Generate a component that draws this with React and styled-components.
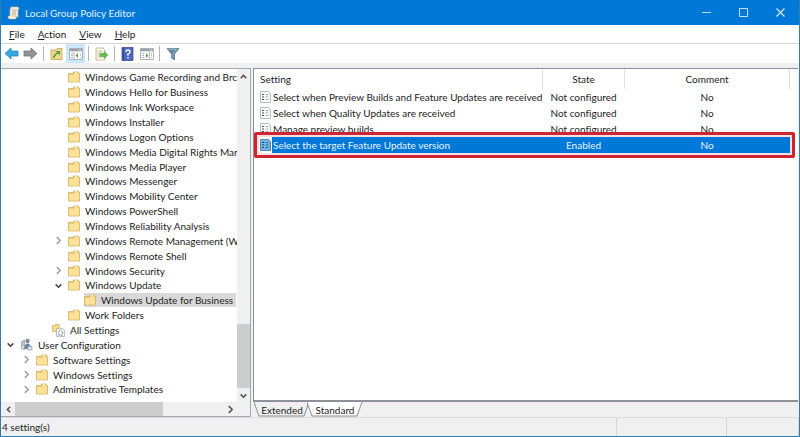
import styled, { createGlobalStyle } from 'styled-components';

const GlobalStyle = createGlobalStyle`
  * {
    box-sizing: border-box;
  }

  body {
    margin: 0;
    font-family: Lato, "Open Sans", sans-serif;
    font-size: 10px;
    line-height: 14px;
    font-variant-ligatures: none;
    color: #222;
  }

  button {
    font: inherit;
    font-variant-ligatures: none;
    color: inherit;
    border: 0;
    margin: 0;
    padding: 0;
    background: none;
  }

  svg {
    display: block;
    flex: none;
  }
`;

const WindowStyled = styled.div`
  height: 100vh;
  display: flex;
  flex-direction: column;
  border: solid #2f7fa8;
  border-width: 0 1px 1px 1px;
  background: #f0f0f0;
`;

const TitleBarStyled = styled.header`
  height: 25px;
  flex: none;
  display: flex;
  align-items: center;
  padding-left: 6px;
  background: #0078d7;
  color: #e2f1ff;
`;

const TitleStyled = styled.h1`
  flex: 1;
  margin: 0 0 0 5px;
  font-size: 10px;
  font-weight: 400;
`;

const CaptionButtonStyled = styled.button`
  width: 37px;
  height: 25px;
  display: flex;
  align-items: center;
  justify-content: center;
`;

const MenuBarStyled = styled.nav`
  height: 19px;
  flex: none;
  display: flex;
  align-items: center;
  gap: 13px;
  padding-left: 8px;
  background: #fff;
  border-bottom: 1px solid #d4d4d4;
`;

const ToolBarStyled = styled.div`
  height: 19px;
  flex: none;
  display: flex;
  align-items: center;
  padding-left: 1px;
  background: #fff;
`;

const ToolButtonStyled = styled.button`
  width: 19px;
  height: 19px;
  display: flex;
  align-items: center;
  justify-content: center;
  background: ${props => props.$active ? '#cce8ff' : 'transparent'};
`;

const ToolDividerStyled = styled.span`
  width: 1px;
  height: 15px;
  margin: 0 3px;
  background: #b4b4b4;
`;

const ContentStyled = styled.main`
  flex: 1;
  min-height: 0;
  display: grid;
  grid-template-columns: 250px minmax(0, 1fr);
  column-gap: 2px;
  padding: 5px 1px 0 0;
`;

const TreePaneStyled = styled.section`
  min-height: 0;
  display: grid;
  grid-template-columns: minmax(0, 1fr) 13px;
  grid-template-rows: minmax(0, 1fr) 14px;
  background: #fff;
  border: solid #a5a9ae;
  border-width: 1px 1px 1px 0;
`;

const TreeStyled = styled.ul`
  min-height: 0;
  margin: 0;
  padding: 1px 0 5px;
  list-style: none;
  display: flex;
  flex-direction: column;
  overflow: hidden;
`;

const TreeRowStyled = styled.li`
  flex: 1;
  min-height: 0;
  display: flex;
  align-items: center;
  padding-left: ${props => props.$level * 16 + 5}px;
  white-space: nowrap;
`;

const ExpanderStyled = styled.span`
  width: 14px;
  flex: none;
`;

const TreeItemStyled = styled.span`
  display: flex;
  align-items: center;
  gap: 5px;
  padding-right: 3px;
  background: ${props => props.$selected ? '#d9d9d9' : 'transparent'};
`;

const VerticalScrollStyled = styled.div`
  min-height: 0;
  display: flex;
  flex-direction: column;
  background: #f0f0f0;
`;

const HorizontalScrollStyled = styled.div`
  display: flex;
  padding-left: 1px;
  background: #f0f0f0;
`;

const ScrollButtonStyled = styled.button`
  width: 13px;
  height: 14px;
  flex: none;
  display: flex;
  align-items: center;
  justify-content: center;
`;

const ScrollTrackStyled = styled.div`
  flex: 1;
  display: flex;
  flex-direction: ${props => props.$vertical ? 'column' : 'row'};
  justify-content: ${props => props.$vertical ? 'flex-end' : 'flex-start'};
`;

const ScrollThumbStyled = styled.div`
  flex: 0 0 ${props => props.$size};
  background: #cdcdcd;
`;

const ScrollCornerStyled = styled.div`
  background: #f0f0f0;
`;

const DetailPaneStyled = styled.section`
  min-width: 0;
  min-height: 0;
  display: flex;
  flex-direction: column;
`;

const ListStyled = styled.div`
  flex: 1;
  background: #fff;
  border: solid #8d9298;
  border-width: 1px 0 2px 1px;
`;

const TableStyled = styled.table`
  width: calc(100% - 8px);
  table-layout: fixed;
  border-collapse: collapse;
`;

const HeadCellStyled = styled.th`
  width: ${props => props.$width || 'auto'};
  height: 20px;
  padding: 0 0 0 ${props => props.$align ? 0 : 6}px;
  font-weight: 400;
  text-align: ${props => props.$align || 'left'};
  border-right: 1px solid #e2e2e2;
`;

const CellStyled = styled.td`
  height: 16px;
  padding: 0;
  text-align: ${props => props.$align || 'left'};
  white-space: nowrap;
`;

const SettingStyled = styled.span`
  display: flex;
  align-items: center;
  gap: 1px;
  padding-left: 6px;
`;

const SettingNameStyled = styled.span`
  flex: 1;
  padding-left: 1px;
  line-height: 16px;
`;

const RowStyled = styled.tr`
  position: relative;
  color: ${props => props.$selected ? '#e9f4ff' : 'inherit'};

  ${CellStyled}:not(:first-child),
  ${SettingNameStyled} {
    background: ${props => props.$selected ? '#0078d7' : 'transparent'};
  }
`;

const HighlightStyled = styled.span`
  position: absolute;
  inset: -5px -5px -5px 0;
  border: 3px solid #cf2431;
  border-radius: 2px;
  box-shadow: inset 0 0 0 2px #f7dfe2;
  pointer-events: none;
`;

const TabsStyled = styled.div`
  height: 15px;
  flex: none;
  display: flex;
  padding-left: 1px;
`;

const TabStyled = styled.button`
  position: relative;
  width: 56px;
  height: 15px;
  margin-right: -3px;
`;

const TabShapeStyled = styled.svg`
  position: absolute;
  inset: 0;
  width: 100%;
  height: 100%;
`;

const TabTextStyled = styled.span`
  position: relative;
`;

const StatusBarStyled = styled.footer`
  height: 19px;
  flex: none;
  display: grid;
  grid-template-columns: 1fr 110px 72px;
  border-top: 1px solid #dcdcdc;
`;

const StatusCellStyled = styled.span`
  padding: 2px 0 0 1px;
  border-right: 1px solid #d7d7d7;
`;

const ScrollIcon = () => (
  <svg width="13" height="14" viewBox="0 0 13 14">
    <path d="M4 1h7l1 2-1 1v7H3V4z" fill="#f4efdf" stroke="#cbbd98" strokeWidth=".7" />
    <path d="M5 4h5M5 6h4M5 8h4" stroke="#a99c7b" strokeWidth=".8" />
    <path d="M1 10h8v3H2q-1-1-1-3z" fill="#fffaf0" stroke="#bda878" strokeWidth=".6" />
  </svg>
);

const FolderIcon = () => (
  <svg width="12" height="12" viewBox="0 0 12 12">
    <path d="M.5 2.5h5V1h5v1.5h1V11H.5z" fill="#f0cd73" stroke="#cda953" strokeWidth=".7" />
    <path d="M1 4h5l1-1.2h4v7.8H1z" fill="#fbe29a" />
    <path d="M6.5 1.8h3" stroke="#fff8dc" strokeWidth=".9" />
  </svg>
);

const AllSettingsIcon = () => (
  <svg width="13" height="13" viewBox="0 0 13 13">
    <path d="M.5 1.5h3V.5h3v1h1v6h-7z" fill="#f8dc8d" stroke="#d1ad58" strokeWidth=".7" />
    <path d="M4.5 4.5h6l2 2v6h-8z" fill="#fafafa" stroke="#a3a7ab" strokeWidth=".7" />
    <circle cx="8.5" cy="8.7" r="2.2" fill="none" stroke="#a0a9af" strokeWidth="1.2" strokeDasharray="1.3 .6" />
    <path d="M6 11.5h5" stroke="#b1b7bb" strokeWidth=".7" />
  </svg>
);

const UserIcon = () => (
  <svg width="13" height="13" viewBox="0 0 12 13">
    <path d="M1 3.5 4 2v9.5l-3-1z" fill="#d7dce0" stroke="#899199" strokeWidth=".7" />
    <path d="M2 5l1.3-.5M2 7h1.3" stroke="#58636d" strokeWidth=".7" />
    <circle cx="7" cy="3" r="2.2" fill="#7f8d9e" />
    <path d="M4 11q0-5.5 3-5.5t3.5 5.5z" fill="#6680a6" />
    <path d="M7.5 8.5h4V12h-5z" fill="#dbe0e5" stroke="#8b949d" strokeWidth=".6" />
  </svg>
);

const PolicyIcon = ({ selected }) => (
  <svg width="11" height="12" viewBox="0 0 11 12">
    <path d="M.5.5h8l2 2v9H.5z" fill={selected ? '#76b5df' : '#fff'} stroke={selected ? '#2f78aa' : '#a9adb1'} strokeWidth=".8" />
    <path d="M2 3.5h2M2 6h2M2 8.5h2" stroke={selected ? '#124d7c' : '#3f4e5a'} strokeWidth="1.2" />
    <path d="M5.5 3.5h3M5.5 6h3M5.5 8.5h3" stroke={selected ? '#23628f' : '#9ba3aa'} strokeWidth=".9" />
  </svg>
);

const ArrowIcon = ({ back }) => (
  <svg width="15" height="13" viewBox="0 0 15 13">
    <path
      d={back ? 'M1 6.5 7 1v3h7v5H7v3z' : 'M14 6.5 8 1v3H1v5h7v3z'}
      fill={back ? '#35a8df' : '#929292'}
      stroke={back ? '#2588bd' : '#777'}
      strokeWidth=".8"
    />
  </svg>
);

const UpIcon = () => (
  <svg width="14" height="14" viewBox="0 0 14 14">
    <path d="M1 3h5l1-1.5h5v11H1z" fill="#f0d98a" stroke="#b79c4c" strokeWidth=".7" />
    <path d="M3.5 11Q4 8 8 5.5" fill="none" stroke="#4f9c3c" strokeWidth="1.4" />
    <path d="M5.5 4H10v4.5z" fill="#4f9c3c" />
  </svg>
);

const PaneIcon = ({ right }) => (
  <svg width="14" height="12" viewBox="0 0 14 12">
    <path d="M.5.5h13v11H.5z" fill="#fff" stroke="#9aa0a6" strokeWidth=".8" />
    <path d="M1 1h12v2.3H1z" fill="#989fa5" />
    <path d="M9.5 2h.8M11.3 2h.8" stroke="#fff" />
    <path d={right ? 'M9.5 4v7' : 'M5 4v7'} stroke="#a5acb2" strokeWidth=".8" />
    <path d="M2 5.5h2M2 7.5h2M2 9.5h2M11 5.5h1M11 7.5h1M11 9.5h1" stroke="#a6afb7" strokeWidth=".9" />
    <path d={right ? 'M6 5v5l2.5-2.5z' : 'M9 5v5L6.5 7.5z'} fill="#5aa852" />
  </svg>
);

const ExportIcon = () => (
  <svg width="14" height="14" viewBox="0 0 14 14">
    <path d="M1 1h7l2 2v10H1z" fill="#fffbed" stroke="#b5aa7c" strokeWidth=".8" />
    <path d="M2.5 4h5M2.5 6h3M2.5 8h2M2.5 10h5" stroke="#a5a78f" strokeWidth=".7" />
    <path d="M5 6.5h4v-2L13 8l-4 3.5v-2H5z" fill="#65bd50" stroke="#43983a" strokeWidth=".5" />
  </svg>
);

const HelpIcon = () => (
  <svg width="13" height="14" viewBox="0 0 13 14">
    <path d="M1 .5h11v13H1z" fill="#4c68c0" stroke="#2d448c" strokeWidth=".7" />
    <path d="M2.3 1v12" stroke="#2c428a" />
    <path d="M5 5q0-2 2-2t2 2q0 1-2 2v1.8M7 10v1.5" fill="none" stroke="#fff" strokeWidth="1.4" />
  </svg>
);

const FilterIcon = () => (
  <svg width="14" height="14" viewBox="0 0 14 14">
    <path d="M1 1.5h12L8.5 7v6L5.5 11V7z" fill="#65859e" stroke="#47677f" strokeWidth=".6" />
    <path d="M2.5 2.3h8.2L6.8 6.7v4" fill="none" stroke="#a9c4d5" strokeWidth=".9" />
  </svg>
);

const chevrons = {
  up: 'M1.5 5.5 4 3l2.5 2.5',
  down: 'M1.5 3 4 5.5 6.5 3',
  left: 'M5.5 1.5 3 4l2.5 2.5',
  right: 'M2.5 1 5.5 4l-3 3',
};

const Chevron = ({ direction, color = '#505050' }) => (
  <svg width="9" height="9" viewBox="0 0 8 8">
    <path d={chevrons[direction]} fill="none" stroke={color} strokeWidth="1.3" />
  </svg>
);

const treeIcons = {
  folder: FolderIcon,
  all: AllSettingsIcon,
  user: UserIcon,
};

const tree = [
  { label: 'Windows Game Recording and Brc', level: 3 },
  { label: 'Windows Hello for Business', level: 3 },
  { label: 'Windows Ink Workspace', level: 3 },
  { label: 'Windows Installer', level: 3 },
  { label: 'Windows Logon Options', level: 3 },
  { label: 'Windows Media Digital Rights Mar', level: 3 },
  { label: 'Windows Media Player', level: 3 },
  { label: 'Windows Messenger', level: 3 },
  { label: 'Windows Mobility Center', level: 3 },
  { label: 'Windows PowerShell', level: 3 },
  { label: 'Windows Reliability Analysis', level: 3 },
  { label: 'Windows Remote Management (W', level: 3, expander: 'right' },
  { label: 'Windows Remote Shell', level: 3 },
  { label: 'Windows Security', level: 3, expander: 'right' },
  { label: 'Windows Update', level: 3, expander: 'down' },
  { label: 'Windows Update for Business', level: 4, selected: true },
  { label: 'Work Folders', level: 3 },
  { label: 'All Settings', level: 2, icon: 'all' },
  { label: 'User Configuration', level: 0, icon: 'user', expander: 'down' },
  { label: 'Software Settings', level: 1, expander: 'right' },
  { label: 'Windows Settings', level: 1, expander: 'right' },
  { label: 'Administrative Templates', level: 1, expander: 'right' },
];

const settings = [
  { name: 'Select when Preview Builds and Feature Updates are received', state: 'Not configured', comment: 'No' },
  { name: 'Select when Quality Updates are received', state: 'Not configured', comment: 'No' },
  { name: 'Manage preview builds', state: 'Not configured', comment: 'No' },
  { name: 'Select the target Feature Update version', state: 'Enabled', comment: 'No', selected: true },
];

const TreeRow = ({ item }) => {
  const Icon = treeIcons[item.icon || 'folder'];

  return (
    <TreeRowStyled $level={item.level}>
      <ExpanderStyled>
        {item.expander && <Chevron direction={item.expander} color={item.expander === 'down' ? '#404040' : '#a0a0a0'} />}
      </ExpanderStyled>
      <TreeItemStyled $selected={item.selected}>
        <Icon />
        {item.label}
      </TreeItemStyled>
    </TreeRowStyled>
  );
};

const SettingRow = ({ setting }) => (
  <RowStyled $selected={setting.selected}>
    <CellStyled>
      <SettingStyled>
        <PolicyIcon selected={setting.selected} />
        <SettingNameStyled>{setting.name}</SettingNameStyled>
      </SettingStyled>
    </CellStyled>
    <CellStyled $align="center">{setting.state}</CellStyled>
    <CellStyled $align="center">
      {setting.comment}
      {setting.selected && <HighlightStyled />}
    </CellStyled>
  </RowStyled>
);

const App = () => (
  <>
    <GlobalStyle />
    <WindowStyled>
      <TitleBarStyled>
        <ScrollIcon />
        <TitleStyled>Local Group Policy Editor</TitleStyled>
        <CaptionButtonStyled aria-label="Minimize">
          <svg width="9" height="9" viewBox="0 0 9 9"><path d="M0 4.5h9" stroke="#b9dcf7" /></svg>
        </CaptionButtonStyled>
        <CaptionButtonStyled aria-label="Maximize">
          <svg width="9" height="9" viewBox="0 0 9 9"><path d="M.5.5h8v8h-8z" fill="none" stroke="#c9e4fa" /></svg>
        </CaptionButtonStyled>
        <CaptionButtonStyled aria-label="Close">
          <svg width="9" height="9" viewBox="0 0 9 9"><path d="m.5.5 8 8m0-8-8 8" stroke="#d9edfc" strokeWidth="1.1" /></svg>
        </CaptionButtonStyled>
      </TitleBarStyled>
      <MenuBarStyled>
        <button><u>F</u>ile</button>
        <button><u>A</u>ction</button>
        <button><u>V</u>iew</button>
        <button><u>H</u>elp</button>
      </MenuBarStyled>
      <ToolBarStyled>
        <ToolButtonStyled aria-label="Back"><ArrowIcon back /></ToolButtonStyled>
        <ToolButtonStyled aria-label="Forward"><ArrowIcon /></ToolButtonStyled>
        <ToolDividerStyled />
        <ToolButtonStyled aria-label="Up one level"><UpIcon /></ToolButtonStyled>
        <ToolButtonStyled aria-label="Show console tree" $active><PaneIcon /></ToolButtonStyled>
        <ToolDividerStyled />
        <ToolButtonStyled aria-label="Export list"><ExportIcon /></ToolButtonStyled>
        <ToolDividerStyled />
        <ToolButtonStyled aria-label="Help"><HelpIcon /></ToolButtonStyled>
        <ToolButtonStyled aria-label="Show action pane"><PaneIcon right /></ToolButtonStyled>
        <ToolDividerStyled />
        <ToolButtonStyled aria-label="Filter"><FilterIcon /></ToolButtonStyled>
      </ToolBarStyled>
      <ContentStyled>
        <TreePaneStyled>
          <TreeStyled>
            {tree.map(item => <TreeRow key={item.label} item={item} />)}
          </TreeStyled>
          <VerticalScrollStyled>
            <ScrollButtonStyled aria-label="Scroll up"><Chevron direction="up" /></ScrollButtonStyled>
            <ScrollTrackStyled $vertical><ScrollThumbStyled $size="21%" /></ScrollTrackStyled>
            <ScrollButtonStyled aria-label="Scroll down"><Chevron direction="down" /></ScrollButtonStyled>
          </VerticalScrollStyled>
          <HorizontalScrollStyled>
            <ScrollButtonStyled aria-label="Scroll left"><Chevron direction="left" /></ScrollButtonStyled>
            <ScrollTrackStyled><ScrollThumbStyled $size="71%" /></ScrollTrackStyled>
            <ScrollButtonStyled aria-label="Scroll right"><Chevron direction="right" /></ScrollButtonStyled>
          </HorizontalScrollStyled>
          <ScrollCornerStyled />
        </TreePaneStyled>
        <DetailPaneStyled>
          <ListStyled>
            <TableStyled>
              <thead>
                <tr>
                  <HeadCellStyled>Setting</HeadCellStyled>
                  <HeadCellStyled $width="82px" $align="center">State</HeadCellStyled>
                  <HeadCellStyled $width="165px" $align="center">Comment</HeadCellStyled>
                </tr>
              </thead>
              <tbody>
                {settings.map(setting => <SettingRow key={setting.name} setting={setting} />)}
              </tbody>
            </TableStyled>
          </ListStyled>
          <TabsStyled>
            <TabStyled>
              <TabShapeStyled viewBox="0 0 56 15" preserveAspectRatio="none">
                <path d="M0 0 5 14h45l5-14" fill="#f0f0f0" stroke="#777" strokeWidth=".8" />
              </TabShapeStyled>
              <TabTextStyled>Extended</TabTextStyled>
            </TabStyled>
            <TabStyled>
              <TabShapeStyled viewBox="0 0 56 15" preserveAspectRatio="none">
                <path d="M0 0 5 14h45l5-14" fill="#fff" stroke="#777" strokeWidth=".8" />
              </TabShapeStyled>
              <TabTextStyled>Standard</TabTextStyled>
            </TabStyled>
          </TabsStyled>
        </DetailPaneStyled>
      </ContentStyled>
      <StatusBarStyled>
        <StatusCellStyled>4 setting(s)</StatusCellStyled>
        <StatusCellStyled />
        <StatusCellStyled />
      </StatusBarStyled>
    </WindowStyled>
  </>
);

export default App;
